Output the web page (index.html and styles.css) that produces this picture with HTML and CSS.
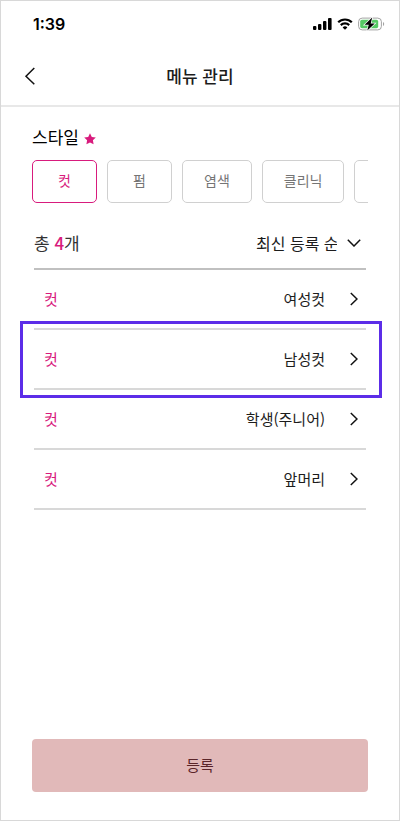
FILE: index.html
```html
<!DOCTYPE html>
<html lang="ko">
  <head>
    <meta charset="UTF-8" />
    <meta name="viewport" content="width=device-width, initial-scale=1.0" />
    <title>메뉴 관리</title>
    <link rel="stylesheet" href="styles.css">
  </head>
  <body>
    <div class="screen">
      <div class="status-bar">
        <span class="time">1:39</span>
        <div class="status-icons">
          <svg width="19" height="12" viewBox="0 0 19 12">
            <rect x="0" y="8" width="3.4" height="4" rx="1"/>
            <rect x="5" y="6" width="3.4" height="6" rx="1"/>
            <rect x="10" y="3" width="3.4" height="9" rx="1"/>
            <rect x="15" y="0" width="3.6" height="12" rx="1"/>
          </svg>
          <svg width="16" height="12" viewBox="0 0 16 12">
            <path d="M1.2 4.3a9.6 9.6 0 0 1 13.6 0M3.8 7.1a6 6 0 0 1 8.4 0" fill="none" stroke="#000" stroke-width="2.2"/>
            <path d="M8 11.8 5.6 9.4a3.4 3.4 0 0 1 4.8 0z"/>
          </svg>
          <svg width="27" height="14" viewBox="0 0 27 14">
            <rect x="0.6" y="1.1" width="22.8" height="11.8" rx="3.6" fill="#fff" stroke="#a3a3a3"/>
            <rect x="2.2" y="2.8" width="18" height="8.4" rx="1.8" fill="#55c964"/>
            <path d="M25 5v4c1.6-.5 1.6-3.5 0-4z" fill="#a3a3a3"/>
            <path d="M14.2.6 6.6 7.7h4.1l-1.4 5.9 7.5-7.2h-4.1z" stroke="#fff" stroke-width="1.4" paint-order="stroke"/>
          </svg>
        </div>
      </div>

      <header>
        <button class="back" type="button" aria-label="뒤로">
          <svg width="12" height="18" viewBox="0 0 12 18"><path d="M10.3 1 2 9.2l8.3 8"/></svg>
        </button>
        <h1>메뉴 관리</h1>
      </header>

      <main>
        <h2>스타일
          <svg width="12" height="12" viewBox="0 0 12 12"><path d="M6 .3l1.8 3.6 4 .6-2.9 2.8.7 4L6 9.4l-3.6 1.9.7-4L.2 4.5l4-.6z"/></svg>
        </h2>
        <div class="chips">
          <button class="chip active" type="button">컷</button>
          <button class="chip" type="button">펌</button>
          <button class="chip" type="button">염색</button>
          <button class="chip" type="button">클리닉</button>
          <button class="chip" type="button" aria-label="더보기"></button>
        </div>

        <div class="list">
          <div class="summary">
            <p>총 <strong>4</strong>개</p>
            <div class="sort">
              <select aria-label="정렬">
                <option>최신 등록 순</option>
              </select>
              <svg width="14" height="8" viewBox="0 0 14 8"><path d="M.8.8 7 7 13.2.8"/></svg>
            </div>
          </div>
          <ul>
            <li><a href="#"><span class="type">컷</span><span>여성컷</span><svg width="8" height="14" viewBox="0 0 8 14"><path d="M.8 1 7 7 .8 13"/></svg></a></li>
            <li class="selected"><a href="#"><span class="type">컷</span><span>남성컷</span><svg width="8" height="14" viewBox="0 0 8 14"><path d="M.8 1 7 7 .8 13"/></svg></a></li>
            <li><a href="#"><span class="type">컷</span><span>학생(주니어)</span><svg width="8" height="14" viewBox="0 0 8 14"><path d="M.8 1 7 7 .8 13"/></svg></a></li>
            <li><a href="#"><span class="type">컷</span><span>앞머리</span><svg width="8" height="14" viewBox="0 0 8 14"><path d="M.8 1 7 7 .8 13"/></svg></a></li>
          </ul>
        </div>
      </main>

      <footer>
        <button class="submit" type="button">등록</button>
      </footer>
    </div>
  </body>
</html>
```
FILE: styles.css
```css
*{
    margin: 0;
    padding: 0;
    box-sizing: border-box;
}
body{
    font-family: "Noto Sans CJK KR", sans-serif;
    font-size: 15px;
    line-height: 24px;
    color: #1c1c1c;
    background-color: #fff;
}
button, select{
    font-family: inherit;
    background: none;
    border: none;
    cursor: pointer;
}
svg{
    display: block;
    flex-shrink: 0;
}
.screen{
    display: flex;
    flex-direction: column;
    min-height: 100vh;
    border: 1px solid #d8d8d8;
}

/* phone status bar */
.status-bar{
    display: flex;
    justify-content: space-between;
    align-items: center;
    height: 46px;
    padding: 0 14px 0 32px;
}
.time{
    font-family: Inter, sans-serif;
    font-size: 16px;
    font-weight: 600;
    color: #000;
}
.status-icons{
    display: flex;
    align-items: center;
    gap: 5px;
}

header{
    position: relative;
    display: flex;
    justify-content: center;
    align-items: center;
    height: 60px;
    border-bottom: 2px solid #e8e8e8;
}
h1{
    font-size: 17px;
    font-weight: 500;
}
.back{
    position: absolute;
    left: 17px;
    padding: 6px;
}
.back path, .sort path, li path{
    fill: none;
    stroke: #111;
    stroke-width: 1.5;
}

main{
    flex: 1;
    padding: 18px 31px;
}
h2{
    display: flex;
    align-items: center;
    gap: 5px;
    font-size: 17px;
    font-weight: 400;
    color: #000;
}
h2 svg{
    margin-top: 4px;
    fill: #d81b7d;
}
.chips{
    display: flex;
    gap: 10px;
    margin-top: 11px;
    overflow: hidden;
}
.chip{
    flex-shrink: 0;
    min-width: 65px;
    height: 43px;
    padding: 0 21px 3px;
    border: 1px solid #d0d0d0;
    border-radius: 5px;
    font-size: 14px;
    color: #757575;
}
.chip.active{
    border-color: #d81b7d;
    color: #d81b7d;
}

.list{
    margin: 20px 2px 0;
}
.summary{
    display: flex;
    justify-content: space-between;
    align-items: center;
    height: 47px;
    padding-bottom: 6px;
    border-bottom: 2px solid #c0c0c0;
    font-size: 17px;
    color: #333;
}
.summary strong{
    font-weight: 500;
    color: #d81b7d;
}
.sort{
    display: flex;
    align-items: center;
    gap: 10px;
    padding-right: 5px;
}
.sort select{
    appearance: none;
    font-size: 16px;
    color: #1c1c1c;
}
ul{
    list-style: none;
}
li{
    position: relative;
    border-bottom: 2px solid #d8d8d8;
}
li a{
    display: flex;
    align-items: center;
    height: 58px;
    padding: 0 8px 0 10px;
    color: inherit;
    text-decoration: none;
}
.type{
    margin-right: auto;
    color: #d81b7d;
}
li svg{
    margin-left: 25px;
}
.selected::after{
    content: "";
    position: absolute;
    inset: -9px -16px -10px -14px;
    border: 3px solid #5c2de8;
    pointer-events: none;
}

footer{
    padding: 0 31px 28px;
}
.submit{
    display: block;
    width: 100%;
    height: 53px;
    padding-bottom: 2px;
    border-radius: 4px;
    background-color: #e1b9b9;
    font-size: 15px;
    color: #5a2529;
}
```
